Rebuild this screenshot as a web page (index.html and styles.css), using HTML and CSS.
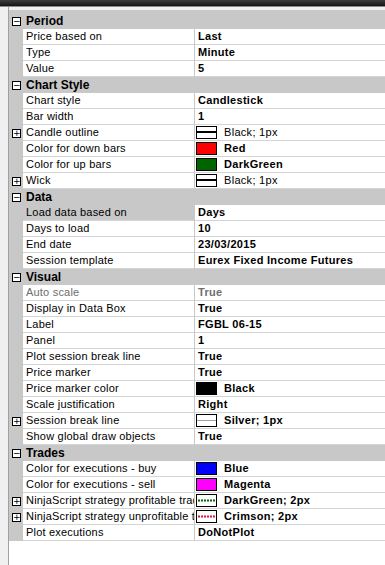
FILE: index.html
```html
<!DOCTYPE html>
<html>
<head>
<meta charset="utf-8">
<link rel="stylesheet" href="styles.css">
</head>
<body>
<div class="topbar"></div>
<div class="frame">
  <div class="strip"></div>
  <div class="grid">
    <div class="row cat"><span class="gut"><span class="box">−</span></span><span class="catname">Period</span></div>
    <div class="row"><span class="gut"></span><span class="name">Price based on</span><span class="val">Last</span></div>
    <div class="row"><span class="gut"></span><span class="name">Type</span><span class="val">Minute</span></div>
    <div class="row"><span class="gut"></span><span class="name">Value</span><span class="val">5</span></div>

    <div class="row cat"><span class="gut"><span class="box">−</span></span><span class="catname">Chart Style</span></div>
    <div class="row"><span class="gut"></span><span class="name">Chart style</span><span class="val">Candlestick</span></div>
    <div class="row"><span class="gut"></span><span class="name">Bar width</span><span class="val">1</span></div>
    <div class="row"><span class="gut"><span class="box">+</span></span><span class="name">Candle outline</span><span class="val sw"><svg class="swatch" width="21" height="13" viewBox="0 0 21 13"><rect x="0.5" y="0.5" width="20" height="12" fill="#fff" stroke="#000"/><rect x="1" y="5" width="19" height="2" fill="#000"/></svg><span class="reg">Black; 1px</span></span></div>
    <div class="row"><span class="gut"></span><span class="name">Color for down bars</span><span class="val sw"><svg class="swatch" width="21" height="13" viewBox="0 0 21 13"><rect x="0.5" y="0.5" width="20" height="12" fill="#ff0000" stroke="#000"/></svg><span>Red</span></span></div>
    <div class="row"><span class="gut"></span><span class="name">Color for up bars</span><span class="val sw"><svg class="swatch" width="21" height="13" viewBox="0 0 21 13"><rect x="0.5" y="0.5" width="20" height="12" fill="#006400" stroke="#000"/></svg><span>DarkGreen</span></span></div>
    <div class="row"><span class="gut"><span class="box">+</span></span><span class="name">Wick</span><span class="val sw"><svg class="swatch" width="21" height="13" viewBox="0 0 21 13"><rect x="0.5" y="0.5" width="20" height="12" fill="#fff" stroke="#000"/><rect x="1" y="5" width="19" height="2" fill="#000"/></svg><span class="reg">Black; 1px</span></span></div>

    <div class="row cat"><span class="gut"><span class="box">−</span></span><span class="catname">Data</span></div>
    <div class="row"><span class="gut"></span><span class="name sel">Load data based on</span><span class="val">Days</span></div>
    <div class="row"><span class="gut"></span><span class="name">Days to load</span><span class="val">10</span></div>
    <div class="row"><span class="gut"></span><span class="name">End date</span><span class="val">23/03/2015</span></div>
    <div class="row"><span class="gut"></span><span class="name">Session template</span><span class="val">Eurex Fixed Income Futures</span></div>

    <div class="row cat"><span class="gut"><span class="box">−</span></span><span class="catname">Visual</span></div>
    <div class="row"><span class="gut"></span><span class="name dis">Auto scale</span><span class="val dis">True</span></div>
    <div class="row"><span class="gut"></span><span class="name">Display in Data Box</span><span class="val">True</span></div>
    <div class="row"><span class="gut"></span><span class="name">Label</span><span class="val">FGBL 06-15</span></div>
    <div class="row"><span class="gut"></span><span class="name">Panel</span><span class="val">1</span></div>
    <div class="row"><span class="gut"></span><span class="name">Plot session break line</span><span class="val">True</span></div>
    <div class="row"><span class="gut"></span><span class="name">Price marker</span><span class="val">True</span></div>
    <div class="row"><span class="gut"></span><span class="name">Price marker color</span><span class="val sw"><svg class="swatch" width="21" height="13" viewBox="0 0 21 13"><rect x="0.5" y="0.5" width="20" height="12" fill="#000" stroke="#000"/></svg><span>Black</span></span></div>
    <div class="row"><span class="gut"></span><span class="name">Scale justification</span><span class="val">Right</span></div>
    <div class="row"><span class="gut"><span class="box">+</span></span><span class="name">Session break line</span><span class="val sw"><svg class="swatch" width="21" height="13" viewBox="0 0 21 13"><rect x="0.5" y="0.5" width="20" height="12" fill="#fff" stroke="#000"/><rect x="1" y="6" width="19" height="1" fill="#a0a0a0"/></svg><span>Silver; 1px</span></span></div>
    <div class="row"><span class="gut"></span><span class="name">Show global draw objects</span><span class="val">True</span></div>

    <div class="row cat"><span class="gut"><span class="box">−</span></span><span class="catname">Trades</span></div>
    <div class="row"><span class="gut"></span><span class="name">Color for executions - buy</span><span class="val sw"><svg class="swatch" width="21" height="13" viewBox="0 0 21 13"><rect x="0.5" y="0.5" width="20" height="12" fill="#0000ff" stroke="#000"/></svg><span>Blue</span></span></div>
    <div class="row"><span class="gut"></span><span class="name">Color for executions - sell</span><span class="val sw"><svg class="swatch" width="21" height="13" viewBox="0 0 21 13"><rect x="0.5" y="0.5" width="20" height="12" fill="#ff00ff" stroke="#000"/></svg><span>Magenta</span></span></div>
    <div class="row"><span class="gut"><span class="box">+</span></span><span class="name">NinjaScript strategy profitable trade</span><span class="val sw"><svg class="swatch" width="21" height="13" viewBox="0 0 21 13"><rect x="0.5" y="0.5" width="20" height="12" fill="#fff" stroke="#000"/><line x1="2" y1="6.5" x2="19" y2="6.5" stroke="#006400" stroke-width="2" stroke-dasharray="2 1"/></svg><span>DarkGreen; 2px</span></span></div>
    <div class="row"><span class="gut"><span class="box">+</span></span><span class="name">NinjaScript strategy unprofitable trade</span><span class="val sw"><svg class="swatch" width="21" height="13" viewBox="0 0 21 13"><rect x="0.5" y="0.5" width="20" height="12" fill="#fff" stroke="#000"/><line x1="2" y1="6.5" x2="19" y2="6.5" stroke="#dc143c" stroke-width="2" stroke-dasharray="2 1"/></svg><span>Crimson; 2px</span></span></div>
    <div class="row"><span class="gut"></span><span class="name">Plot executions</span><span class="val">DoNotPlot</span></div>
    <div class="rest"></div>
  </div>
</div>
</body>
</html>
```

FILE: styles.css
```css
html, body {
  margin: 0;
  padding: 0;
  background: #ffffff;
  height: 100%;
  overflow: hidden;
}
body {
  font-family: "Liberation Sans", Arial, sans-serif;
  font-size: 11px;
  color: #000;
  display: flex;
  flex-direction: column;
}
.topbar {
  height: 6px;
  background: linear-gradient(to bottom, #3c3c3c, #141414);
  border-bottom: 1px solid #8a8a8a;
  flex: none;
}
.frame {
  flex: 1;
  display: flex;
  background: #f0f0f0;
}
.strip {
  width: 8px;
  border-right: 1px solid #a0a0a0;
  background: #f0f0f0;
  flex: none;
}
.grid {
  flex: 1;
  display: flex;
  flex-direction: column;
  padding-top: 6px;
  background: linear-gradient(to bottom, #f0f0f0 0, #f0f0f0 3px, #c8c8c8 3px);
}
.row {
  display: grid;
  grid-template-columns: 14px 172px 1fr;
  height: 16px;
  flex: none;
  line-height: 15px;
}
.gut {
  background: #c8c8c8;
  position: relative;
}
.box {
  position: absolute;
  left: 3px;
  top: 4px;
  width: 7px;
  height: 7px;
  border: 1px solid #000;
  background: #fff;
  font-size: 9px;
  line-height: 7px;
  text-align: center;
  color: #000;
  font-family: "DejaVu Sans", sans-serif;
}
.name {
  background: #fff;
  border-right: 1px solid #c8c8c8;
  border-bottom: 1px solid #d4d4d4;
  padding-left: 3px;
  white-space: nowrap;
  overflow: hidden;
  letter-spacing: 0.2px;
}
.name.sel {
  background: #c8c8c8;
}
.val {
  background: #fff;
  border-bottom: 1px solid #d4d4d4;
  padding-left: 3px;
  font-weight: bold;
  white-space: nowrap;
  overflow: hidden;
  letter-spacing: 0.3px;
}
.val.sw {
  padding-left: 1px;
  display: flex;
  align-items: flex-start;
}
.swatch {
  display: block;
  margin-top: 1px;
  margin-right: 7px;
  flex: none;
}
.reg {
  font-weight: normal;
}
.dis {
  color: #6d6d6d;
}
.cat {
  background: #c8c8c8;
  grid-template-columns: 14px 1fr;
}
.catname {
  font-weight: bold;
  font-size: 12px;
  padding-left: 3px;
  line-height: 16px;
}
.rest {
  flex: 1;
  background: #fff;
}
```
